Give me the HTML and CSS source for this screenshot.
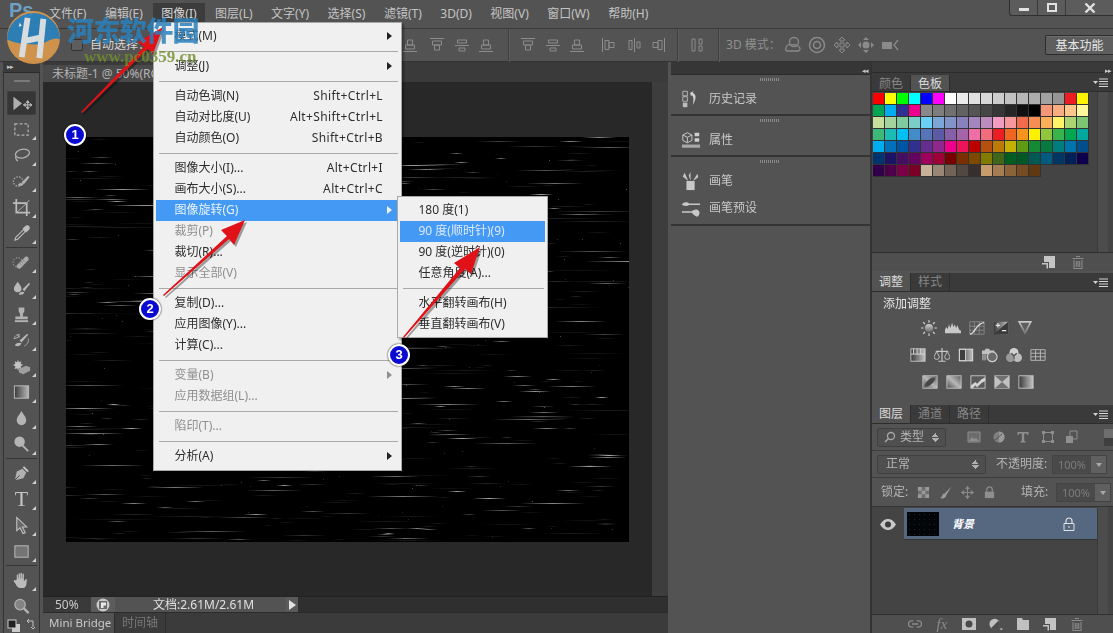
FILE: index.html
```html
<!DOCTYPE html>
<html lang="zh-CN">
<head>
<meta charset="utf-8">
<title>Photoshop</title>
<link rel="stylesheet" href="styles.css">
</head>
<body>
<svg class="defs" width="0" height="0" aria-hidden="true">
  <defs>
    <linearGradient id="gh" x1="0" x2="1" y1="0" y2="0"><stop offset="0" stop-color="#3a3a3a"/><stop offset="1" stop-color="#c4c4c4"/></linearGradient>
    <linearGradient id="gv" x1="0" x2="0" y1="0" y2="1"><stop offset="0" stop-color="#d0d0d0"/><stop offset="1" stop-color="#6a6a6a"/></linearGradient>
    <linearGradient id="gd" x1="0" x2="1" y1="1" y2="0"><stop offset="0" stop-color="#4a4a4a"/><stop offset=".5" stop-color="#b8b8b8"/><stop offset="1" stop-color="#5a5a5a"/></linearGradient>
    <symbol id="new" viewBox="0 0 14 14"><path d="M2 1h11v12H7V7H2z" fill="#c4c4c4"/><path d="M0 8h6v5.500H4.500V9.500H0z" fill="#c4c4c4"/></symbol>
    <symbol id="trash" viewBox="0 0 14 14"><path d="M5 1.500h4M1.500 3.500h11M3 5v8.500h8V5M5.300 6v6M7 6v6M8.700 6v6" fill="none" stroke="#8a8a8a" stroke-width="1.100"/></symbol>
    <symbol id="menu-ic" viewBox="0 0 15 9"><path d="M0 3h5L2.500 6z" fill="#d4d4d4"/><path d="M6 1h9M6 3.500h9M6 6h9M6 8.500h9" stroke="#d4d4d4" fill="none"/></symbol>
    <symbol id="a1" viewBox="0 0 18 18"><path d="M2 2.500h14M4.500 5h9v4h-9zM6.500 9h5v5h-5z" fill="none" stroke="#8c8c8c"/></symbol>
    <symbol id="a2" viewBox="0 0 18 18"><path d="M2 9.500h14M4.500 4h9v3h-9zM6 12h6v3H6z" fill="none" stroke="#8c8c8c"/></symbol>
    <symbol id="a3" viewBox="0 0 18 18"><path d="M2 15.500h14M4.500 9h9v4h-9zM6.500 4h5v5h-5z" fill="none" stroke="#8c8c8c"/></symbol>
    <symbol id="a4" viewBox="0 0 18 18"><path d="M2.500 2v14M5 4.500h4v9H5zM9 6.500h5v5H9z" fill="none" stroke="#8c8c8c"/></symbol>
    <symbol id="a5" viewBox="0 0 18 18"><path d="M9.500 2v14M4 4.500h3v9H4zM12 6h3v6h-3z" fill="none" stroke="#8c8c8c"/></symbol>
    <symbol id="a6" viewBox="0 0 18 18"><path d="M15.500 2v14M9 4.500h4v9H9zM4 6.500h5v5H4z" fill="none" stroke="#8c8c8c"/></symbol>
  </defs>
</svg>

<div class="app">
  <header class="menubar">
    <span class="ps">Ps</span>
    <nav class="menus">
      <span>文件(F)</span><span>编辑(E)</span><span class="on">图像(I)</span><span>图层(L)</span><span>文字(Y)</span><span>选择(S)</span><span>滤镜(T)</span><span>3D(D)</span><span>视图(V)</span><span>窗口(W)</span><span>帮助(H)</span>
    </nav>
    <div class="winctl">
      <span class="wbtn w-min"><i></i></span>
      <span class="wbtn w-max"><i></i></span>
      <span class="wbtn w-close"><svg width="12" height="12" viewBox="0 0 12 12"><path d="M1.500 1.500l9 9M10.500 1.500l-9 9" stroke="#e2e2e2" stroke-width="2.400"/></svg></span>
    </div>
  </header>

  <section class="options">
    <span class="check"></span><span class="opt-label">自动选择：</span>
    <div class="aligns">
      <svg class="al al-first"><use href="#a3"/></svg>
      <svg class="al al-g"><use href="#a1"/></svg><svg class="al"><use href="#a2"/></svg><svg class="al"><use href="#a3"/></svg>
      <i class="vsep s1"></i>
      <svg class="al al-a"><use href="#a1"/></svg><svg class="al"><use href="#a2"/></svg><svg class="al"><use href="#a3"/></svg>
      <svg class="al al-b"><use href="#a4"/></svg><svg class="al"><use href="#a5"/></svg><svg class="al"><use href="#a6"/></svg>
      <i class="vsep s2"></i>
      <svg class="al al-c" viewBox="0 0 18 18"><path d="M4 3h3v12H4zM11 3h3v5h-3zM11 10h3v5h-3z" fill="none" stroke="#8c8c8c"/></svg>
      <i class="vsep s3"></i>
    </div>
    <span class="mode3d">3D 模式：</span>
    <div class="icons3d">
      <svg viewBox="0 0 20 20"><circle cx="11" cy="7" r="4.500" fill="none" stroke="#8a8a8a" stroke-width="1.300"/><path d="M3 13c0-3 3-4 5-3 3-1 7 0 8 2 2 1 1 4-1 4H5c-2 0-3-1-2-3z" fill="none" stroke="#8a8a8a" stroke-width="1.300"/></svg>
      <svg viewBox="0 0 20 20"><circle cx="10" cy="10" r="7.500" fill="none" stroke="#8a8a8a" stroke-width="1.500"/><circle cx="10" cy="10" r="3.500" fill="none" stroke="#8a8a8a" stroke-width="1.500"/></svg>
      <svg viewBox="0 0 20 20"><path d="M10 2l3 3h-2v4h4V7l3 3-3 3v-2h-4v4h2l-3 3-3-3h2v-4H5v2l-3-3 3-3v2h4V5H7z" fill="none" stroke="#8a8a8a"/></svg>
      <svg viewBox="0 0 20 20"><path d="M10 2l3 3H7zM10 18l3-3H7zM2 10l3-3v6zM18 10l-3-3v6z" fill="#8a8a8a"/><circle cx="10" cy="10" r="3.500" fill="#8a8a8a"/></svg>
      <svg viewBox="0 0 20 20"><path d="M1 7h10v7H1z" fill="#8a8a8a"/><path d="M17 5l-4 5 4 5" fill="none" stroke="#8a8a8a" stroke-width="1.300"/></svg>
    </div>
    <button class="workspace">基本功能</button>
  </section>

  <main class="workspace-grid">
    <aside class="toolbar">
      <div class="tb-top"><span class="chev">▸▸</span></div>
      <div class="grip"></div>
      <div class="tools">
        <span class="tool active nofly"><svg viewBox="0 0 24 20"><path d="M3 3l9 7-9 7z" fill="#bcbcbc"/><path d="M18 7v9M13.500 11.500h9M18 7l-1.500 2h3zM18 16l-1.500-2h3zM13.500 11.500l2-1.500v3zM22.500 11.500l-2-1.500v3z" stroke="#d0d0d0" fill="none"/></svg></span>
        <span class="tool"><svg viewBox="0 0 20 20"><rect x="3" y="4" width="14" height="12" fill="none" stroke="#bcbcbc" stroke-width="1.300" stroke-dasharray="3 2"/></svg></span>
        <span class="tool"><svg viewBox="0 0 20 20"><ellipse cx="11" cy="8" rx="7.500" ry="4.500" transform="rotate(-12 11 8)" fill="none" stroke="#bcbcbc" stroke-width="1.400"/><path d="M4 11c-1 3 1 3 2 5" fill="none" stroke="#bcbcbc" stroke-width="1.400"/></svg></span>
        <span class="tool"><svg viewBox="0 0 20 20"><circle cx="6.500" cy="10" r="5" fill="none" stroke="#bcbcbc" stroke-width="1.300" stroke-dasharray="1.500 1.500"/><path d="M10 11l7-7 1.500 1.500-6 7.500zM6 14c2-3 4-3 6-1-1 2-4 2-6 1z" fill="#bcbcbc"/></svg></span>
        <span class="tool"><svg viewBox="0 0 20 20"><path d="M1 5.500h14.500V19M4.500 1v14.500H19" fill="none" stroke="#c8c8c8" stroke-width="1.800"/><path d="M4.500 15.500L15.500 5.500M15.500 5l3-3" stroke="#bcbcbc" fill="none"/></svg></span>
        <span class="tool"><svg viewBox="0 0 20 20"><path d="M3 17l1-3 8-8 2 2-8 8z" fill="none" stroke="#c8c8c8" stroke-width="1.200"/><path d="M11 5l3-3c1-1 3-1 4 0s1 3 0 4l-3 3z" fill="#c8c8c8"/></svg></span>
        <i class="tsep"></i>
        <span class="tool"><svg viewBox="0 0 20 20"><circle cx="6" cy="10" r="5" fill="none" stroke="#bcbcbc" stroke-dasharray="1.500 1.500"/><path d="M5 13l9-9c1.500-1 4 .5 3.500 3L9 16c-2 1.500-5-1-4-3z" fill="#b4b4b4"/><path d="M10 9l1 1M12 7.500l1 1M8.500 11l1 1" stroke="#555"/></svg></span>
        <span class="tool"><svg viewBox="0 0 20 20"><path d="M6 3c2 3 4 5 4 7a4 4 0 0 1-8 0c0-2 2-4 4-7z" fill="#c4c4c4"/><path d="M11 11l7-7 1 1-6 8zM7 16c2-3 4-3 6-2-1 3-4 3-6 2z" fill="#c4c4c4"/></svg></span>
        <span class="tool"><svg viewBox="0 0 20 20"><path d="M7 2.500h6v4l-1.500 3V12h5v3h-13v-3h5V9.500L7 6.500z" fill="#bcbcbc"/><path d="M3 17h14" stroke="#bcbcbc" stroke-width="2"/></svg></span>
        <span class="tool"><svg viewBox="0 0 20 20"><path d="M8 10l8-7 1 1-7 8zM3 15c2-3 5-3 7-2-1 3-5 4-7 2z" fill="#c4c4c4"/><path d="M2 8c1-3 4-5 6-4l-2 1 2 1-5 2zM17 8c1 3-1 6-4 8" fill="none" stroke="#bcbcbc"/></svg></span>
        <span class="tool"><svg viewBox="0 0 22 20"><path d="M7 2l1 3 3-1-1 3 3 1-3 2 1 3-3-1-1 3-1-3-3 1 1-3-3-2 3-1-1-3 3 1z" fill="#d0d0d0"/><path d="M8 13l8-4 5 2v4l-8 4-5-2z" fill="#a8a8a8"/></svg></span>
        <span class="tool"><svg viewBox="0 0 20 20"><rect x="2.500" y="3" width="15" height="13" fill="url(#gh)" stroke="#c8c8c8"/></svg></span>
        <span class="tool"><svg viewBox="0 0 20 20"><path d="M10 2c2 4 5 6 5 10a5 5 0 0 1-10 0c0-4 3-6 5-10z" fill="#c0c0c0"/></svg></span>
        <span class="tool"><svg viewBox="0 0 20 20"><circle cx="8" cy="7" r="5.500" fill="#c0c0c0"/><path d="M11 11l6 6" stroke="#c0c0c0" stroke-width="2"/></svg></span>
        <i class="tsep"></i>
        <span class="tool"><svg viewBox="0 0 20 20"><path d="M3 17l2-9 6-3 4 4-3 6z" fill="#bcbcbc"/><path d="M3 17l5-5" stroke="#484848"/><path d="M12 3l5 5" stroke="#d4d4d4" stroke-width="2"/></svg></span>
        <span class="tool"><span class="t-glyph">T</span></span>
        <span class="tool"><svg viewBox="0 0 20 20"><path d="M5 1.500v14l3.500-3 3 6 2.500-1-3-6h4.500z" fill="#6a6a6a" stroke="#d0d0d0" stroke-width="1.100"/></svg></span>
        <span class="tool"><svg viewBox="0 0 20 20"><rect x="3" y="4" width="14" height="12" fill="#787878" stroke="#c8c8c8"/></svg></span>
        <i class="tsep"></i>
        <span class="tool"><svg viewBox="0 0 20 20"><path d="M5 9V4.500c0-1 1.500-1 1.500 0V8h.5V3c0-1 1.500-1 1.500 0v5h.5V2.500c0-1 1.500-1 1.500 0V8h.5V3.500c0-1 1.500-1 1.500 0V11l1.500-2c1-1 2.500 0 1.500 1L15 15c-1 2-2 3-4 3H9c-3 0-4-2-5-4l-2-3c-.5-1 1-2 1.500-1z" fill="#c8c8c8"/></svg></span>
        <span class="tool nofly"><svg viewBox="0 0 20 20"><circle cx="8.500" cy="8" r="5.500" fill="#8a8a8a" stroke="#bcbcbc" stroke-width="1.300"/><path d="M12.500 12l5 5" stroke="#bcbcbc" stroke-width="2.400"/></svg></span>
        <span class="tool nofly colors"><svg viewBox="0 0 30 16"><rect x="5" y="6" width="8" height="8" fill="#d8d8d8"/><rect x="1" y="2" width="8" height="8" fill="#1d1d1d" stroke="#d8d8d8"/><path d="M20 3h6M26 3v6M20 3l2-2M20 3l2 2M26 11l-2-2M26 11l2-2" stroke="#d0d0d0" fill="none"/></svg></span>
      </div>
    </aside>

    <section class="doc-col">
      <div class="doc-tabs"><span class="doc-tab">未标题-1 @ 50%(RGB/8)</span></div>
      <div class="doc-row">
        <div class="doc-area"><canvas id="art" class="art" width="563" height="405"></canvas></div>
        <div class="vscroll"></div>
      </div>
      <div class="status">
        <span class="zoom-val">50%</span>
        <span class="st-ic"><svg width="14" height="14" viewBox="0 0 14 14"><circle cx="7" cy="7" r="6.500" fill="#c8c8c8"/><path d="M3 3h8v8H3z" fill="#6a6a6a"/><path d="M5 4.500h5v3H7.500V10H5z" fill="#e8e8e8"/></svg></span>
        <span class="st-doc">文档:2.61M/2.61M</span>
        <span class="st-next"></span>
        <span class="st-track"></span>
      </div>
      <div class="bottom-tabs"><span class="bt on">Mini Bridge</span><span class="bt">时间轴</span></div>
    </section>

    <section class="dock">
      <div class="dock-top"><span class="chev">◂◂</span></div>
      <div class="dock-sec s-a">
        <i class="dgrip"></i>
        <div class="dock-item"><svg viewBox="0 0 22 20"><path d="M2 1.500h5v5H2zM2 7.500h5v5H2z" fill="none" stroke="#bcbcbc"/><path d="M2 14h5v5H2z" fill="#bcbcbc"/><path d="M10 3l4-1.500-1 2c3 1 5 5 0 13 1-5 1-9-1-10.500l-1 1z" fill="#cfcfcf"/></svg><span>历史记录</span></div>
      </div>
      <div class="dock-sec s-a">
        <i class="dgrip"></i>
        <div class="dock-item"><svg viewBox="0 0 22 20"><path d="M7 2l5 2.500v6L7 13l-5-2.500v-6z" fill="none" stroke="#cfcfcf"/><path d="M7 13V7L2 4.500M7 7l5-2.500" stroke="#cfcfcf" fill="none"/><path d="M15 2h5v4h-5zM15 8h5v4h-5z" fill="#cfcfcf"/><path d="M1 15h20v3.500H1z" fill="#a8a8a8"/></svg><span>属性</span></div>
      </div>
      <div class="dock-sec s-b">
        <i class="dgrip"></i>
        <div class="dock-item i-1"><svg viewBox="0 0 22 22"><path d="M6 11h9v10H6z" fill="#c8c8c8"/><path d="M8 11L4 2 2 6zM10.500 11V1l-2 4zM13 11l5-8 1 4z" fill="#c8c8c8"/></svg><span>画笔</span></div>
        <div class="dock-item i-2"><svg viewBox="0 0 22 20"><path d="M1 5c2-3 6-3 8-1h12v1.500H9C7 7 3 7 1 5zM1 12.500h11c2-2 6-3 8 0 1 2 0 5-2 6-3-1-5-3-6-4.500H1z" fill="#c8c8c8"/></svg><span>画笔预设</span></div>
      </div>
      <div class="dock-rest"></div>
    </section>

    <section class="right">
      <div class="r-top"><span class="chev">▸▸</span></div>

      <div class="tabs t-swatch"><span class="tab dim">颜色</span><span class="tab on">色板</span><svg class="tabmenu"><use href="#menu-ic"/></svg></div>
      <div class="sw-body">
        <div class="swatches">
<i style="background:#ff0000"></i><i style="background:#ffff00"></i><i style="background:#00ff00"></i><i style="background:#00ffff"></i><i style="background:#0000ff"></i><i style="background:#ff00ff"></i><i style="background:#ffffff"></i><i style="background:#ebebeb"></i><i style="background:#e1e1e1"></i><i style="background:#d7d7d7"></i><i style="background:#cccccc"></i><i style="background:#c2c2c2"></i><i style="background:#b7b7b7"></i><i style="background:#acacac"></i><i style="background:#a1a1a1"></i><i style="background:#959595"></i><i style="background:#ed1c24"></i><i style="background:#fff200"></i>
<i style="background:#00a651"></i><i style="background:#00aeef"></i><i style="background:#2e3192"></i><i style="background:#ec008c"></i><i style="background:#898989"></i><i style="background:#7d7d7d"></i><i style="background:#707070"></i><i style="background:#626262"></i><i style="background:#555555"></i><i style="background:#464646"></i><i style="background:#363636"></i><i style="background:#262626"></i><i style="background:#111111"></i><i style="background:#000000"></i><i style="background:#f7977a"></i><i style="background:#fbad82"></i><i style="background:#fdc68c"></i><i style="background:#fff799"></i>
<i style="background:#c6df9c"></i><i style="background:#a4d49d"></i><i style="background:#81ca9d"></i><i style="background:#7bcdc9"></i><i style="background:#6ccff7"></i><i style="background:#7ca6d8"></i><i style="background:#8293ca"></i><i style="background:#8881be"></i><i style="background:#a286bd"></i><i style="background:#bc8cbf"></i><i style="background:#f49bc1"></i><i style="background:#f5999d"></i><i style="background:#f16c4d"></i><i style="background:#f68e54"></i><i style="background:#fbaf5a"></i><i style="background:#fff467"></i><i style="background:#acd372"></i><i style="background:#7dc473"></i>
<i style="background:#3cb878"></i><i style="background:#1cbbb4"></i><i style="background:#00bff3"></i><i style="background:#438cca"></i><i style="background:#5574b9"></i><i style="background:#5c5aa7"></i><i style="background:#855fa8"></i><i style="background:#a763a9"></i><i style="background:#ef6ea8"></i><i style="background:#f16d7e"></i><i style="background:#ee1d24"></i><i style="background:#f16522"></i><i style="background:#f7941d"></i><i style="background:#fff100"></i><i style="background:#8fc63d"></i><i style="background:#37b54a"></i><i style="background:#00a650"></i><i style="background:#00a99e"></i>
<i style="background:#00aeef"></i><i style="background:#0072bc"></i><i style="background:#0054a5"></i><i style="background:#2f3090"></i><i style="background:#662d91"></i><i style="background:#91278e"></i><i style="background:#ec008c"></i><i style="background:#ed145a"></i><i style="background:#bc0000"></i><i style="background:#b5500f"></i><i style="background:#bd7a08"></i><i style="background:#c4b000"></i><i style="background:#5f9a12"></i><i style="background:#148a34"></i><i style="background:#077a3f"></i><i style="background:#007e7e"></i><i style="background:#0074ad"></i><i style="background:#004f8c"></i>
<i style="background:#003471"></i><i style="background:#1b1464"></i><i style="background:#440e62"></i><i style="background:#630460"></i><i style="background:#9e005d"></i><i style="background:#9e0039"></i><i style="background:#790000"></i><i style="background:#7b2e00"></i><i style="background:#7d4900"></i><i style="background:#827b00"></i><i style="background:#406618"></i><i style="background:#005e20"></i><i style="background:#005826"></i><i style="background:#005952"></i><i style="background:#005b7f"></i><i style="background:#003663"></i><i style="background:#002157"></i><i style="background:#0d004c"></i>
<i style="background:#32004b"></i><i style="background:#4b0049"></i><i style="background:#7b0046"></i><i style="background:#7a0026"></i><i style="background:#c7b299"></i><i style="background:#998675"></i><i style="background:#736357"></i><i style="background:#534741"></i><i style="background:#362f2d"></i><i style="background:#c69c6d"></i><i style="background:#a67c52"></i><i style="background:#8c6239"></i><i style="background:#754c24"></i><i style="background:#603913"></i>
        </div>
        <div class="rscroll"></div>
      </div>
      <div class="p-foot f-sw"><svg><use href="#new"/></svg><svg><use href="#trash"/></svg></div>

      <div class="tabs t-adj"><span class="tab on">调整</span><span class="tab dim">样式</span><svg class="tabmenu"><use href="#menu-ic"/></svg></div>
      <div class="adj">
        <div class="adj-title">添加调整</div>
        <div class="adj-row r1">
          <svg viewBox="0 0 18 18"><circle cx="9" cy="9" r="4.500" fill="url(#gv)"/><path d="M9 0v3M9 15v3M0 9h3M15 9h3M2.500 2.500l2 2M13.500 13.500l2 2M15.500 2.500l-2 2M4.500 13.500l-2 2" stroke="#cfcfcf" stroke-width="1.300"/></svg>
          <svg viewBox="0 0 18 18"><path d="M0 15V11l1.500-3 1.500 2 1.500-5 1.500 4L8 3l1.500 5L11 5l1.500 4L14 6l2 5 2 1v3z" fill="#c8c8c8"/></svg>
          <svg viewBox="0 0 18 18"><path d="M1 2h16v14H1zM1 7h16M1 11.500h16M6 2v14M11.500 2v14" fill="none" stroke="#8a8a8a"/><path d="M1 16c6 0 6-12 16-13" fill="none" stroke="#dcdcdc" stroke-width="1.400"/></svg>
          <svg viewBox="0 0 18 18"><path d="M1 2h16v14H1z" fill="url(#gh)"/><path d="M1 16L17 2v14z" fill="#3a3a3a"/><path d="M3 6h5M5.500 3.500v5M10 12h5" stroke="#e8e8e8" stroke-width="1.300"/></svg>
          <svg viewBox="0 0 18 18"><path d="M1 1h16L9 17z" fill="url(#gv)"/><path d="M4 3h10L9 13z" fill="#5f5f5f"/></svg>
        </div>
        <div class="adj-row r2">
          <svg viewBox="0 0 18 18"><rect x="1" y="2" width="16" height="14" fill="url(#gh)" stroke="#c8c8c8"/><path d="M4 2v6M8 2v6M12 2v6M1 8h16" stroke="#ddd"/></svg>
          <svg viewBox="0 0 18 18"><path d="M9 1v15M5 16h8M2 5h14" stroke="#c8c8c8" stroke-width="1.300"/><path d="M0 11l3-6 3 6a3 3 0 0 1-6 0zM12 11l3-6 3 6a3 3 0 0 1-6 0z" fill="none" stroke="#c8c8c8"/></svg>
          <svg viewBox="0 0 18 18"><rect x="1" y="2" width="16" height="14" fill="url(#gh)"/><rect x="1.500" y="2.500" width="7" height="13" fill="#3f3f3f" stroke="#d8d8d8"/><rect x="1.500" y="2.500" width="15" height="13" fill="none" stroke="#d8d8d8"/></svg>
          <svg viewBox="0 0 18 18"><path d="M0 4h3l1-2h4l1 2h5v4H0z" fill="#c0c0c0"/><path d="M0 8h5v7H0z" fill="#8f8f8f"/><circle cx="11.500" cy="11" r="5.500" fill="#6a6a6a" stroke="#cfcfcf" stroke-width="1.300"/></svg>
          <svg viewBox="0 0 18 18"><circle cx="9" cy="6" r="5" fill="#d0d0d0"/><circle cx="5" cy="12" r="5" fill="#9a9a9a"/><circle cx="13" cy="12" r="5" fill="#bdbdbd"/><path d="M6 7l3 3 3-3M9 10v4" stroke="#4a4a4a" stroke-width="1.300" fill="none"/></svg>
          <svg viewBox="0 0 18 18"><path d="M1 3h16v12H1zM1 7h16M1 11h16M6.300 3v12M11.700 3v12" fill="none" stroke="#bcbcbc"/></svg>
        </div>
        <div class="adj-row r3">
          <svg viewBox="0 0 18 18"><rect x="1" y="2" width="16" height="14" fill="url(#gd)" stroke="#c8c8c8"/><ellipse cx="9" cy="9" rx="7" ry="3" transform="rotate(-40 9 9)" fill="#484848"/></svg>
          <svg viewBox="0 0 18 18"><rect x="1" y="2" width="16" height="14" fill="url(#gd)" stroke="#c8c8c8"/></svg>
          <svg viewBox="0 0 18 18"><rect x="1" y="2" width="16" height="14" fill="#5a5a5a" stroke="#c8c8c8"/><path d="M1 13l5-4 2 2 5-5 4-2v4l-4 2-5 5-2-2-3 3H1z" fill="#d4d4d4"/></svg>
          <svg viewBox="0 0 18 18"><rect x="1" y="2" width="16" height="14" fill="#c0c0c0" stroke="#c8c8c8"/><path d="M1 2l8 7 8-7zM1 16l8-7 8 7z" fill="#707070"/></svg>
          <svg viewBox="0 0 18 18"><rect x="1" y="2" width="16" height="14" fill="url(#gh)" stroke="#c8c8c8"/></svg>
        </div>
      </div>

      <div class="tabs t-layer"><span class="tab on">图层</span><span class="tab dim">通道</span><span class="tab dim">路径</span><svg class="tabmenu"><use href="#menu-ic"/></svg></div>
      <div class="lrow l-filter">
        <div class="sel sel-kind"><svg class="mag" viewBox="0 0 12 12"><circle cx="7" cy="5" r="3.500" fill="none" stroke="#a8a8a8" stroke-width="1.300"/><path d="M4.500 7.500L1 11" stroke="#a8a8a8" stroke-width="1.400"/></svg><span>类型</span><i class="updown"></i></div>
        <div class="filter-icons">
          <svg viewBox="0 0 14 14"><path d="M1 2h12v10H1z" fill="#6c6c6c" stroke="#8e8e8e"/><path d="M2 11l3-4 2 2 2-1 3 3z" fill="#8e8e8e"/></svg>
          <svg viewBox="0 0 14 14"><circle cx="7" cy="7" r="5.500" fill="#7f7f7f"/><path d="M7 1.500a5.500 5.500 0 0 1 0 11z" fill="#9a9a9a"/><path d="M3 10l7-6" stroke="#505050"/></svg>
          <svg viewBox="0 0 14 14"><path d="M1.500 2h11v3h-1l-1-1.500H8.200v7.300l1.300.7v1H4.500v-1l1.300-.7V3.500H3.500L2.500 5h-1z" fill="#8e8e8e"/></svg>
          <svg viewBox="0 0 14 14"><path d="M2.500 2.500h9v9h-9z" fill="none" stroke="#8e8e8e"/><path d="M1 1h3v3H1zM10 1h3v3h-3zM1 10h3v3H1zM10 10h3v3h-3z" fill="#8e8e8e"/></svg>
          <svg viewBox="0 0 14 14"><path d="M5 1h7v8H5z" fill="none" stroke="#8e8e8e"/><path d="M1 6h7v7H1z" fill="#8e8e8e"/></svg>
        </div>
        <i class="toggle"></i>
      </div>
      <div class="lrow l-blend">
        <div class="sel sel-blend"><span>正常</span><i class="updown"></i></div>
        <span class="lbl lbl-op">不透明度:</span>
        <div class="num"><span>100%</span><b></b></div>
      </div>
      <div class="lrow l-lock">
        <span class="lbl lbl-lock">锁定:</span>
        <svg class="lk" viewBox="0 0 14 14"><path d="M1 1h12v12H1z" fill="#6e6e6e"/><path d="M1 1h4v4H1zM9 1h4v4H9zM5 5h4v4H5zM1 9h4v4H1zM9 9h4v4H9z" fill="#9a9a9a"/></svg>
        <svg class="lk" viewBox="0 0 14 14"><path d="M13.500.5L6 8l2 1.500zM6 8c-3 0-2 4-5 5 3 1 7 0 7-3.500z" fill="#9a9a9a"/></svg>
        <svg class="lk" viewBox="0 0 14 14"><path d="M7 .5v13M.5 7h13M7 .5L5 3h4zM7 13.500L5 11h4zM.5 7L3 5v4zM13.500 7L11 5v4z" stroke="#8e8e8e" fill="none"/></svg>
        <svg class="lk" viewBox="0 0 14 14"><path d="M4 6V4a3 3 0 0 1 6 0v2" fill="none" stroke="#8e8e8e" stroke-width="1.300"/><path d="M2 6h10v7H2z" fill="#8e8e8e"/></svg>
        <span class="lbl lbl-fill">填充:</span>
        <div class="num"><span>100%</span><b></b></div>
      </div>
      <div class="layers">
        <div class="layer">
          <span class="eye"><svg width="16" height="11" viewBox="0 0 16 11"><path d="M0 5.500C3 1 5.500 0 8 0s5 1 8 5.500C13 10 10.500 11 8 11S3 10 0 5.500z" fill="#c8c8c8"/><circle cx="8" cy="5.500" r="3" fill="#3c3c3c"/></svg></span>
          <div class="layer-sel">
            <span class="thumb"></span>
            <span class="lname">背景</span>
            <svg class="llock" viewBox="0 0 12 14"><path d="M3 6V4a3 3 0 0 1 6 0v2" fill="none" stroke="#e2e2e2" stroke-width="1.200"/><path d="M1 6.500h10v7H1z" fill="none" stroke="#e2e2e2"/><path d="M5.500 9h1v2h-1z" fill="#e2e2e2"/></svg>
          </div>
        </div>
        <div class="rscroll"></div>
      </div>
      <div class="p-foot f-layer">
        <svg viewBox="0 0 16 14"><path d="M6 3.500H4a3.500 3.500 0 0 0 0 7h2M10 3.500h2a3.500 3.500 0 0 1 0 7h-2M4.500 7h7" fill="none" stroke="#8a8a8a" stroke-width="1.500"/></svg>
        <span class="fx">fx</span>
        <svg viewBox="0 0 14 14"><path d="M0 1h14v12H0z" fill="#c0c0c0"/><circle cx="7" cy="7" r="3.500" fill="#4a4a4a"/></svg>
        <svg viewBox="0 0 16 14"><circle cx="6.500" cy="7" r="6" fill="#c0c0c0"/><path d="M11 3L2.500 11.500A6 6 0 0 0 11 3z" fill="#4c4c4c"/><path d="M12 12h4l-2 2z" fill="#c8c8c8"/></svg>
        <svg viewBox="0 0 14 14"><path d="M1 1h5l1 2h6v10H1z" fill="#c0c0c0"/></svg>
        <svg><use href="#new"/></svg>
        <svg><use href="#trash"/></svg>
      </div>
    </section>
  </main>
</div>

<!-- the open menu and its submenu -->
<div class="menu" role="menu">
  <div class="mi"><span>模式(M)</span><i class="tri"></i></div><hr>
  <div class="mi"><span>调整(J)</span><i class="tri"></i></div><hr>
  <div class="mi"><span>自动色调(N)</span><kbd>Shift+Ctrl+L</kbd></div>
  <div class="mi"><span>自动对比度(U)</span><kbd>Alt+Shift+Ctrl+L</kbd></div>
  <div class="mi"><span>自动颜色(O)</span><kbd>Shift+Ctrl+B</kbd></div><hr>
  <div class="mi"><span>图像大小(I)...</span><kbd>Alt+Ctrl+I</kbd></div>
  <div class="mi"><span>画布大小(S)...</span><kbd>Alt+Ctrl+C</kbd></div>
  <div class="mi hi"><span>图像旋转(G)</span><i class="tri w"></i></div>
  <div class="mi dis"><span>裁剪(P)</span></div>
  <div class="mi"><span>裁切(R)...</span></div>
  <div class="mi dis"><span>显示全部(V)</span></div><hr>
  <div class="mi"><span>复制(D)...</span></div>
  <div class="mi"><span>应用图像(Y)...</span></div>
  <div class="mi"><span>计算(C)...</span></div><hr>
  <div class="mi dis"><span>变量(B)</span><i class="tri g"></i></div>
  <div class="mi dis"><span>应用数据组(L)...</span></div><hr>
  <div class="mi dis"><span>陷印(T)...</span></div><hr>
  <div class="mi"><span>分析(A)</span><i class="tri"></i></div>
</div>
<div class="submenu" role="menu">
  <div class="mi"><span>180 度(1)</span></div>
  <div class="mi hi2"><span>90 度(顺时针)(9)</span></div>
  <div class="mi"><span>90 度(逆时针)(0)</span></div>
  <div class="mi"><span>任意角度(A)...</span></div><hr>
  <div class="mi"><span>水平翻转画布(H)</span></div>
  <div class="mi"><span>垂直翻转画布(V)</span></div>
</div>

<!-- annotation layer drawn over the screenshot -->
<svg class="arrows" width="1113" height="633" viewBox="0 0 1113 633" aria-hidden="true">
  <g fill="#000" opacity=".35" transform="translate(2 2)">
    <path d="M81 112l63-65-6-5 25-15-10 27-5-5-66 64z"/>
    <path d="M163 295l64-59-6-6 24-10-11 25-5-6-65 57z"/>
    <path d="M403 337l57-69-6-5 26-16-9 27-6-5-61 69z"/>
  </g>
  <g fill="#e01218">
    <path d="M81 112l63-65-6-5 25-15-10 27-5-5-66 64z"/>
    <path d="M163 295l64-59-6-6 24-10-11 25-5-6-65 57z"/>
    <path d="M403 337l57-69-6-5 26-16-9 27-6-5-61 69z"/>
  </g>
</svg>
<span class="badge b1">1</span>
<span class="badge b2">2</span>
<span class="badge b3">3</span>

<!-- site watermark -->
<div class="wm">
  <svg class="wm-logo" viewBox="0 0 56 56">
    <circle cx="28" cy="28" r="27" fill="#dd9a4c"/>
    <path d="M1 30A27 27 0 0 1 55 30C47 26 42 35 30 35S10 34 1 30z" fill="#2a83bf"/>
    <path d="M22 8l-6 40M38 9l-4 40M17 32l19-4" stroke="#e6ecef" stroke-width="6" fill="none"/>
    <path d="M14 13l2 3-3 1z" fill="#fff"/>
  </svg>
  <span class="wm-name">河东软件园</span>
  <span class="wm-url">www.pc0359.cn</span>
</div>
<script src="script.js"></script>
</body>
</html>
```

FILE: styles.css
```css
* { box-sizing: border-box; }
html, body { margin: 0; height: 100%; overflow: hidden; }
body {
  position: relative;
  width: 1113px;
  height: 633px;
  background: #535353;
  color: #c8c8c8;
  font: 12px/1.2 "Noto Sans", "Noto Sans CJK SC", sans-serif;
}
.defs { position: absolute; }
.app { display: flex; flex-direction: column; height: 633px; }

/* menu bar */
.menubar { height: 28px; display: flex; align-items: flex-start; background: #535353; }
.ps { width: 49px; padding: 0 0 0 9px; font: bold 20px/20px "Liberation Sans", sans-serif; color: #6ea0c4; }
.menus { display: flex; gap: 18.500px; padding-top: 6px; font-size: 12px; line-height: 16px; color: #c4c4c4; }
.menus .on { margin: -3px -8px 0; padding: 3px 8px 2px; background: #3c3c3c; color: #d8d8d8; }
.winctl { margin-left: auto; display: flex; height: 16px; border: 1px solid #303030; border-top: 0; border-right: 0; border-radius: 0 0 0 3px; background: #5c5c5c; }
.wbtn { display: flex; align-items: center; justify-content: center; border-left: 1px solid #3a3a3a; }
.wbtn:first-child { border-left: 0; }
.w-min { width: 27px; } .w-max { width: 28px; } .w-close { width: 48px; }
.w-min i { width: 10px; height: 3px; margin-top: 4px; background: #e2e2e2; }
.w-max i { width: 10px; height: 9px; border: 2px solid #e2e2e2; }

/* options bar */
.options { height: 34px; display: flex; align-items: center; padding-left: 71px; background: #535353; border-top: 1px solid #3a3a3a; border-bottom: 1px solid #333; }
.check { width: 12px; height: 12px; background: #5e5e5e; border: 1px solid #333; border-radius: 2px; }
.opt-label { margin-left: 7px; color: #d8d8d8; }
.aligns { display: flex; align-items: center; margin-left: 251px; }
.al { width: 18px; height: 18px; margin-left: 6.500px; flex: none; }
.al-first { margin-left: 0; }
.al-g { margin-left: 9px; }
.al-a { margin-left: 10px; }
.al-b { margin-left: 14px; }
.al-c { margin-left: 10px; }
.vsep { width: 1px; height: 33px; background: #3e3e3e; box-shadow: 1px 0 #5e5e5e; flex: none; }
.s1 { margin-left: 13px; } .s2 { margin-left: 10px; } .s3 { margin-left: 12px; }
.mode3d { margin-left: 7px; color: #8f8f8f; }
.icons3d { display: flex; gap: 4.500px; margin-left: 2px; }
.icons3d svg { width: 20px; height: 20px; }
.workspace { margin-left: auto; width: 68px; height: 20px; padding: 0; background: #5e5e5e; color: #e6e6e6; border: 1px solid #2e2e2e; border-right: 0; border-radius: 2px 0 0 2px; font: 12px/16px "Noto Sans CJK SC", sans-serif; box-shadow: inset 0 1px #6e6e6e; }

/* main area */
.workspace-grid { flex: 1; min-height: 0; display: grid; grid-template-columns: 43px 625px 202px 243px; grid-template-rows: minmax(0, 1fr); }

.toolbar { display: flex; flex-direction: column; padding: 0 3px; background: #535353; min-height: 0; }
.tb-top { height: 11px; padding-left: 4px; background: #3b3b3b; font-size: 7px; line-height: 10px; color: #bdbdbd; border-bottom: 1px solid #2c2c2c; }
.chev { letter-spacing: -1px; font-size: 7px; line-height: 10px; color: #c8c8c8; }
.grip { height: 18px; border-left: 1px solid #333; border-right: 1px solid #333; background: linear-gradient(#7a7a7a, #7a7a7a) center 7px / 16px 2px no-repeat; }
.tools { flex: 1; min-height: 0; display: flex; flex-direction: column; border-left: 1px solid #333; border-right: 1px solid #333; }
.tool { position: relative; height: 26px; display: flex; align-items: center; justify-content: center; flex: none; }
.tool svg { width: 19px; height: 19px; flex: none; opacity: .9; }
.tool::after { content: ""; position: absolute; right: 3px; bottom: 2px; border-style: solid; border-width: 0 0 4px 4px; border-color: transparent transparent #d0d0d0 transparent; }
.nofly::after { display: none; }
.active { height: 24px; margin: 0 3px 1px; background: #363636; border-radius: 2px; box-shadow: inset 0 0 0 1px #3f3f3f; }
.active svg { width: 24px; }
.tool.colors { height: 14px; }
.colors svg { width: 30px; height: 16px; }
.t-glyph { font: 22px/22px "Liberation Serif", serif; color: #c4c4c4; }
.tsep { height: 1px; margin: 1px 2px; background: #353535; flex: none; }

.doc-col { display: flex; flex-direction: column; min-width: 0; min-height: 0; background: #3d3d3d; }
.doc-tabs { height: 20px; padding-top: 3px; display: flex; background: #3a3a3a; flex: none; }
.doc-tab { width: 110px; height: 17px; padding-left: 9px; overflow: hidden; white-space: nowrap; background: #4a4a4a; color: #b4b4b4; line-height: 17px; }
.doc-row { flex: 1; min-height: 0; display: flex; }
.doc-area { flex: 1; display: flex; align-items: center; justify-content: center; background: #282828; }
.art { display: block; width: 563px; height: 405px; background: #000; }
.vscroll { width: 16px; background: #3d3d3d; }
.status { height: 16px; flex: none; display: flex; align-items: center; background: #2f2f2f; border-top: 1px solid #222; }
.zoom-val { width: 48px; padding-left: 12px; color: #c8c8c8; background: #3a3a3a; height: 100%; line-height: 15px; }
.st-ic { width: 24px; height: 100%; display: flex; align-items: center; justify-content: center; background: #5c5c5c; }
.st-doc { width: 171px; height: 100%; line-height: 15px; padding-left: 38px; background: #535353; color: #e0e0e0; white-space: nowrap; }
.st-next { position: relative; width: 12px; height: 100%; background: #5a5a5a; }
.st-next::after { content: ""; position: absolute; left: 3px; top: 3px; border-style: solid; border-width: 5px 0 5px 7px; border-color: transparent transparent transparent #e2e2e2; }
.st-track { flex: 1; height: 100%; background: #2f2f2f; }
.bottom-tabs { height: 21px; flex: none; display: flex; background: #3b3b3b; border-top: 1px solid #2b2b2b; }
.bt { padding: 0 7px; line-height: 20px; color: #777; border-right: 1px solid #2e2e2e; white-space: nowrap; }
.bt.on { width: 72px; padding: 0 6px; font-size: 11.500px; background: #535353; color: #c8c8c8; }

.dock { display: flex; flex-direction: column; padding: 0 0 0 3px; background: #535353; min-height: 0; }
.dock-top { height: 13px; flex: none; background: #363636; border-bottom: 1px solid #2a2a2a; text-align: right; padding-right: 2px; }
.dock-sec { position: relative; flex: none; border-bottom: 2px solid #343434; background: #535353; }
.s-a { height: 41px; }
.s-b { height: 69px; }
.dgrip { position: absolute; left: 89px; top: 3px; width: 20px; height: 3px; background: repeating-linear-gradient(90deg, #8a8a8a 0 1px, transparent 1px 2px); }
.dock-item { display: flex; align-items: center; height: 33px; padding: 15px 0 0 10px; color: #c8c8c8; }
.dock-item svg { width: 20px; height: 20px; margin-right: 8px; flex: none; }
.s-b .i-1 { height: 33px; padding-top: 15px; }
.s-b .i-2 { height: 34px; padding-top: 3px; }
.dock-rest { flex: 1; background: #535353; }

.right { display: flex; flex-direction: column; min-height: 0; background: #535353; border-left: 2px solid #333; }
.r-top { height: 11px; flex: none; background: #3a3a3a; text-align: right; padding-right: 2px; border-bottom: 1px solid #2c2c2c; }
.tabs { position: relative; height: 19px; display: flex; background: #3a3a3a; border-bottom: 1px solid #2d2d2d; flex: none; }
.tab { width: 39px; line-height: 18px; text-align: center; font-size: 12px; border-right: 1px solid #2e2e2e; }
.t-swatch .tab { margin-top: 2px; line-height: 17px; }
.tab.on { background: #535353; color: #dadada; }
.tab.dim { color: #868686; }
.tabmenu { position: absolute; right: 5px; top: 5px; width: 15px; height: 9px; }
.sw-body { flex: none; height: 160px; display: flex; background: #444; padding-left: 1px; }
.swatches { width: 225px; height: 100%; padding-top: 1px; display: grid; grid-template-columns: repeat(18, 12px); grid-auto-rows: 12px; align-content: start; }
.swatches i { display: block; border: 1px solid #333; border-width: 0 1px 1px 0; }
.rscroll { width: 11px; margin-left: auto; margin-right: 5px; background: #4c4c4c; border-left: 1px solid #3a3a3a; }
.p-foot { display: flex; justify-content: flex-end; align-items: center; height: 19px; flex: none; background: #4f4f4f; border-top: 1px solid #303030; }
.p-foot svg { width: 14px; height: 14px; }
.f-sw { gap: 15px; padding-right: 28px; margin-bottom: 2px; }
.adj { height: 113px; flex: none; padding: 3px 0 0 10px; }
.adj-title { color: #e4e4e4; line-height: 18px; height: 25px; padding-left: 1px; }
.adj-row { display: flex; gap: 8px; height: 27px; }
.adj-row svg { width: 16px; height: 16px; flex: none; }
.r1 { padding-left: 39px; } .r2 { padding-left: 28px; } .r3 { padding-left: 40px; }
.lrow { display: flex; align-items: center; flex: none; padding-left: 5px; }
.l-filter { height: 27px; border-bottom: 1px solid #3c3c3c; }
.l-blend { height: 27px; border-bottom: 1px solid #3c3c3c; }
.l-lock { height: 29px; border-bottom: 1px solid #333; }
.sel { position: relative; display: flex; align-items: center; height: 19px; background: #4f4f4f; border: 1px solid #404040; border-radius: 2px; color: #b4b4b4; }
.sel-kind { width: 69px; padding-left: 6px; }
.sel-blend { width: 109px; padding-left: 8px; }
.mag { width: 12px; height: 12px; margin-right: 4px; }
.updown { position: absolute; right: 6px; top: 4px; width: 7px; height: 9px; background: linear-gradient(135deg, transparent 50%, #b0b0b0 50%) left top / 4px 4px no-repeat, linear-gradient(225deg, transparent 50%, #b0b0b0 50%) right top / 4px 4px no-repeat, linear-gradient(45deg, transparent 50%, #b0b0b0 50%) left bottom / 4px 4px no-repeat, linear-gradient(315deg, transparent 50%, #b0b0b0 50%) right bottom / 4px 4px no-repeat; }
.filter-icons { display: flex; gap: 10.500px; margin-left: 21px; }
.filter-icons svg { width: 14px; height: 14px; }
.toggle { width: 9px; height: 17px; margin-left: 25px; background: linear-gradient(#6e6e6e 50%, #3e3e3e 50%); }
.lbl { color: #b4b4b4; white-space: nowrap; }
.lbl-op { margin-left: 10px; width: 56px; }
.lbl-lock { margin-left: 4px; width: 36px; }
.lbl-fill { margin-left: 16px; width: 35px; }
.lk { width: 13px; height: 13px; margin-right: 9px; flex: none; }
.num { display: flex; width: 55px; height: 19px; background: #4a4a4a; border: 1px solid #444; color: #7c7c7c; font-size: 11px; line-height: 17px; }
.num span { width: 38px; text-align: center; }
.num b { position: relative; flex: 1; background: #606060; }
.num b::after { content: ""; position: absolute; left: 5px; top: 7px; border-style: solid; border-width: 4px 3px 0; border-color: #a8a8a8 transparent transparent; }
.layers { flex: 1; min-height: 0; display: flex; background: #444; }
.layer { width: 226px; height: 32px; display: flex; margin-top: 1px; }
.eye { width: 32px; height: 100%; display: flex; align-items: center; justify-content: center; }
.layer-sel { flex: 1; display: flex; align-items: center; padding-left: 3px; background: #566780; border-bottom: 1px solid #333; }
.thumb { width: 32px; height: 24px; background: radial-gradient(circle, #1c2228 0 .5px, transparent 1px) 0 0 / 5px 5px, #030608; }
.lname { margin-left: 13px; color: #fff; font-style: italic; font-weight: 700; font-size: 11px; }
.llock { width: 12px; height: 14px; margin-left: 89px; }
.f-layer { height: 19px; justify-content: flex-start; gap: 13px; padding-left: 36px; }
.f-layer svg { flex: none; }
.fx { width: 14px; font: italic 15px/15px "Liberation Serif", serif; color: #8a8a8a; text-align: center; }

/* open menu */
.menu, .submenu { position: absolute; background: #f0f0f0; border: 1px solid #a8a8a8; color: #2e2e2e; font-size: 12px; box-shadow: 2px 2px 2px rgba(0, 0, 0, .35); }
.menu { left: 153px; top: 22px; width: 249px; padding: 3px 2px; }
.submenu { left: 397px; top: 196px; width: 151px; padding: 3px 2px 2px; }
.mi { position: relative; display: flex; justify-content: space-between; align-items: center; height: 21px; padding: 0 16px 0 18.500px; white-space: nowrap; }
.mi kbd { font: inherit; letter-spacing: .35px; }
.mi.hi { background: #4499f5; color: #e8f2fc; margin-right: 2px; }
.mi.hi2 { background: #4499f5; color: #dbeafa; }
.mi.dis { color: #8f8f8f; }
.menu hr, .submenu hr { height: 1px; margin: 4px 1px 4px 3px; border: 0; background: #a9a9a9; }
.tri { position: absolute; right: 7px; top: 6px; border-style: solid; border-width: 4px 0 4px 5px; border-color: transparent transparent transparent #222; }
.tri.w { right: 5px; border-left-color: #f2f2f2; }
.tri.g { border-left-color: #8f8f8f; }

/* annotations */
.arrows { position: absolute; left: 0; top: 0; pointer-events: none; }
.badge { position: absolute; width: 22px; height: 22px; border-radius: 50%; background: #0a0ad2; border: 2px solid #fff; color: #fff; font: bold 13px/18px "Liberation Sans", sans-serif; text-align: center; box-shadow: 0 0 2px #000; }
.b1 { left: 64px; top: 124px; }
.b2 { left: 139px; top: 298px; }
.b3 { left: 388px; top: 344px; }

/* watermark */
.wm { position: absolute; left: 0; top: 0; width: 210px; height: 70px; pointer-events: none; }
.wm-logo { position: absolute; left: 6px; top: 10px; width: 55px; height: 55px; opacity: .9; }
.wm-name { position: absolute; left: 67px; top: 15px; font: 900 27px/30px "Noto Sans CJK SC", sans-serif; letter-spacing: -.6px; color: #2b80bd; opacity: .85; white-space: nowrap; }
.wm-url { position: absolute; left: 84px; top: 47px; font: bold 17px/20px "Liberation Serif", serif; color: #6f8f2a; opacity: .8; white-space: nowrap; }
```

FILE: script.js
```js
// Procedural star-streak image painted on the document canvas.
(function () {
  var c = document.getElementById('art');
  var g = c.getContext('2d');
  var seed = 359;
  function r() { seed = (seed * 1664525 + 1013904223) % 4294967296; return seed / 4294967296; }
  g.fillStyle = '#000';
  g.fillRect(0, 0, c.width, c.height);
  for (var i = 0; i < 640; i++) {
    var x = r() * c.width - 30;
    var y = Math.floor(r() * c.height) + 0.5;
    var bright = r();
    var len = 12 + r() * r() * 90;
    var a = bright * bright * bright * 0.6 + 0.07;
    var grad = g.createLinearGradient(x, y, x + len, y);
    grad.addColorStop(0, 'rgba(255,255,255,0)');
    grad.addColorStop(0.5, 'rgba(255,255,255,' + a + ')');
    grad.addColorStop(1, 'rgba(255,255,255,0)');
    g.strokeStyle = grad;
    g.lineWidth = 1;
    g.beginPath();
    g.moveTo(x, y);
    g.lineTo(x + len, y);
    g.stroke();
  }
  for (var j = 0; j < 120; j++) {
    g.fillStyle = 'rgba(255,255,255,' + (0.08 + r() * 0.25) + ')';
    g.fillRect(Math.floor(r() * c.width), Math.floor(r() * c.height), 1, 1);
  }
})();
```
